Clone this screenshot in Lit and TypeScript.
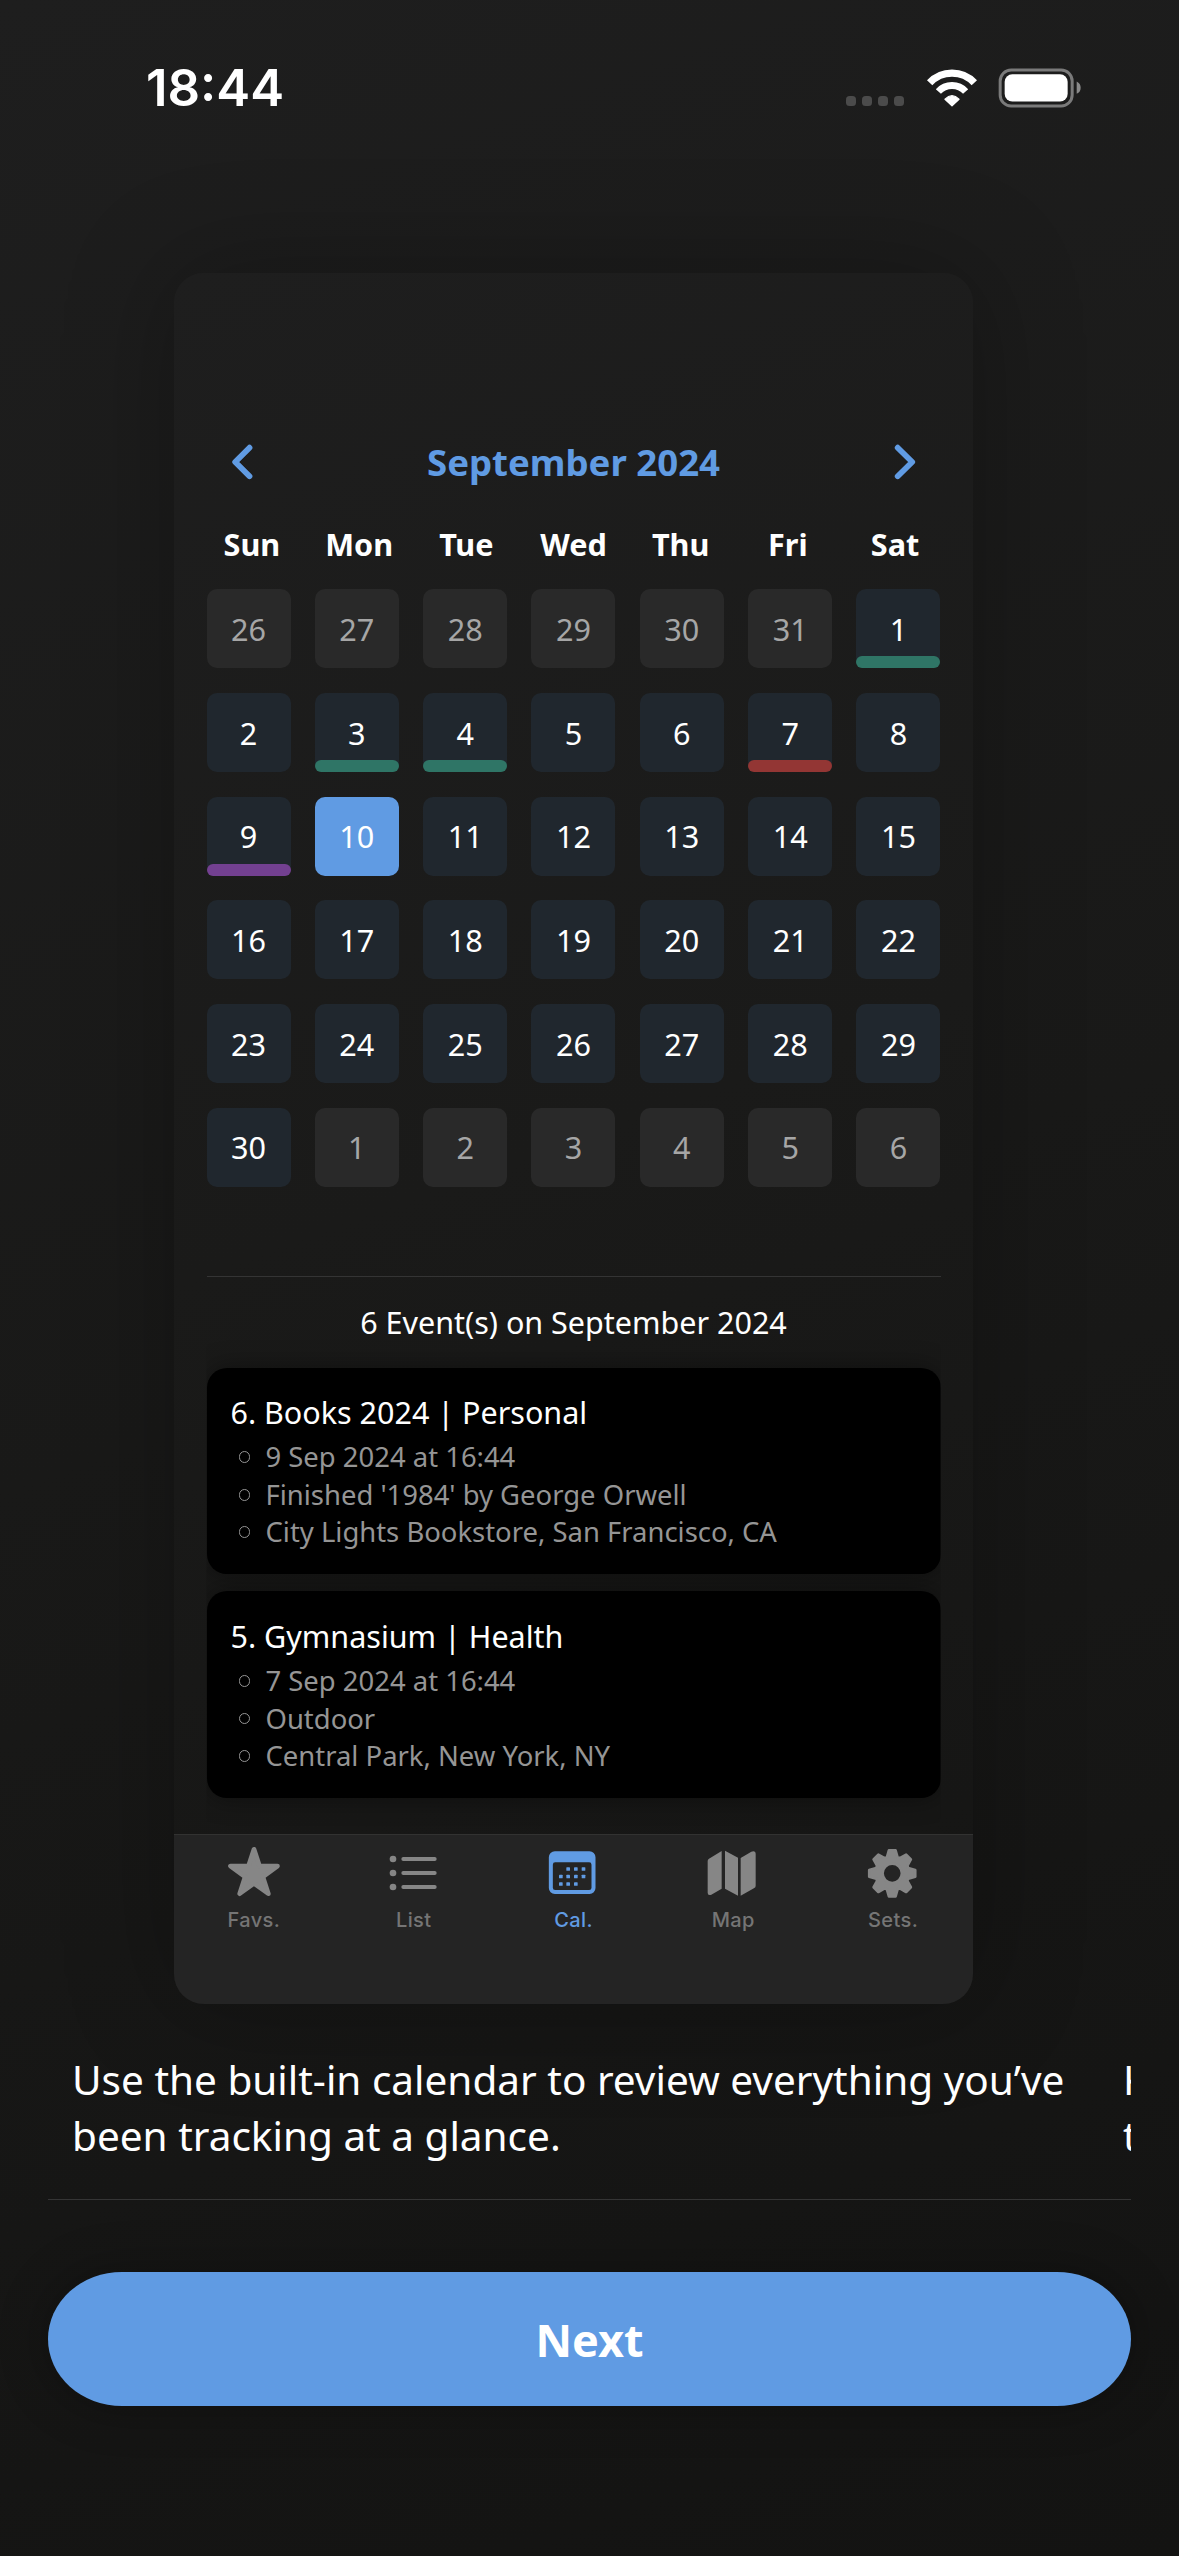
import { LitElement, html, css, svg } from "lit";
import { customElement } from "lit/decorators.js";
import { classMap } from "lit/directives/class-map.js";

type Mark = "green" | "red" | "purple";
interface Day { label: number; outside: boolean; selected: boolean; mark?: Mark; }

const WEEKDAYS = ["Sun", "Mon", "Tue", "Wed", "Thu", "Fri", "Sat"];
const MARKS: Record<number, Mark> = { 1: "green", 3: "green", 4: "green", 7: "red", 9: "purple" };

const range = (from: number, to: number) =>
  Array.from({ length: to - from + 1 }, (_, i) => from + i);

const DAYS: Day[] = [
  ...range(26, 31).map((label) => ({ label, outside: true, selected: false })),
  ...range(1, 30).map((label) => ({ label, outside: false, selected: label === 10, mark: MARKS[label] })),
  ...range(1, 6).map((label) => ({ label, outside: true, selected: false })),
];

const EVENTS = [
  {
    title: "6. Books 2024 | Personal",
    lines: ["9 Sep 2024 at 16:44", "Finished '1984' by George Orwell", "City Lights Bookstore, San Francisco, CA"],
  },
  {
    title: "5. Gymnasium | Health",
    lines: ["7 Sep 2024 at 16:44", "Outdoor", "Central Park, New York, NY"],
  },
];

/** Outline of an eight-toothed gear around the given centre. */
function gearPath(cx: number, cy: number): string {
  const points: string[] = [];
  for (let i = 0; i < 8; i++) {
    const a = (i * Math.PI) / 4;
    for (const [r, w] of [[48, -16], [69, -10], [69, 10], [48, 16]]) {
      const x = cx + r * Math.sin(a) + w * Math.cos(a);
      const y = cy - r * Math.cos(a) + w * Math.sin(a);
      points.push(`${x.toFixed(1)} ${y.toFixed(1)}`);
    }
  }
  const h = 29;
  return `M${points.join("L")}Z M${cx - h} ${cy}a${h} ${h} 0 1 0 ${2 * h} 0a${h} ${h} 0 1 0 ${-2 * h} 0Z`;
}

const TABS = [
  {
    label: "Favs.", box: "192 129 180 180",
    icon: svg`<path stroke="currentColor" stroke-width="14" stroke-linejoin="round"
      d="M282 148L298.5 198H352.5L308.5 230.500L325 281L282 250L239 281L255.500 230.500L211.500 198H265.500Z"/>`,
  },
  {
    label: "List", box: "671 129 180 180",
    icon: svg`${[177, 219, 261].map((y) => svg`<circle cx="698" cy=${y} r="10"/>
      <rect x="723" y=${y - 6} width="106" height="12" rx="6"/>`)}`,
  },
  {
    label: "Cal.", box: "70.5 129 180 180", active: true,
    icon: svg`<path fill-rule="evenodd" d="M106 154H210A18 18 0 0 1 228 172V264A18 18 0 0 1 210 282H106A18 18 0 0 1 88 264V172A18 18 0 0 1 106 154ZM107 187A7 7 0 0 0 100 194V263A7 7 0 0 0 107 270H209A7 7 0 0 0 216 263V194A7 7 0 0 0 209 187Z"/>
      ${[[146, 207], [169, 207], [192, 207], [124, 229.5], [146, 229.5], [169, 229.5], [192, 229.5], [124, 252], [146, 252], [169, 252]].map(
        ([x, y]) => svg`<rect x=${x - 5.5} y=${y - 5.5} width="11" height="11" rx="2"/>`)}`,
  },
  {
    label: "Map", box: "550 129 180 180",
    icon: svg`<path d="M606 153V266L575 284Q564 288 564 278V183Q564 178 568 176ZM616 152L655 173V287L616 266ZM663 174L695 155Q708 151 708 162V257Q708 262 704 264L663 287Z"/>`,
  },
  {
    label: "Sets.", box: "1029.3 129 180 180",
    icon: svg`<path fill-rule="evenodd" stroke="currentColor" stroke-width="8" stroke-linejoin="round" d=${gearPath(1117, 220)}/>`,
  },
];

@customElement("status-bar")
class StatusBar extends LitElement {
  static styles = css`
    :host { display: flex; align-items: center; height: 175px; padding: 0 92.7px 0 146px; box-sizing: border-box; }
    .time { flex: 1; font: 600 50.9px/60px Inter, sans-serif; color: #fff; }
    .dots { display: flex; gap: 6px; margin: 27px 17.5px 0 0; }
    .dot { width: 10px; height: 10px; border-radius: 3.5px; background: #4b4b4b; }
    .wifi { width: 60px; height: 50px; margin-right: 14.8px; }
    .battery { width: 90px; height: 50px; }
  `;
  render() {
    return html`
      <div class="time">18:44</div>
      <div class="dots">${range(1, 4).map(() => html`<span class="dot"></span>`)}</div>
      <svg class="wifi" viewBox="304.5 67.5 180 150" fill="none" stroke="#fff">
        <path stroke-width="22" d="M327.500 127A92 92 0 0 1 461.500 127"/>
        <path stroke-width="21" d="M353.600 153A55.500 55.500 0 0 1 435.400 153"/>
        <path fill="#fff" stroke-width="4" stroke-linejoin="round" d="M394.500 196L373.500 176Q394.500 155 415.500 176Z"/>
      </svg>
      <svg class="battery" viewBox="529 67.5 270 150">
        <rect x="541.5" y="88.5" width="216" height="108" rx="33" fill="none" stroke="#7a7a7a" stroke-width="9"/>
        <rect x="555" y="101" width="189" height="82" rx="23" fill="#fff"/>
        <path fill="#8a8a8a" d="M771 123Q783 129 783 141.500T771 160Z"/>
      </svg>`;
  }
}

@customElement("month-calendar")
class MonthCalendar extends LitElement {
  static styles = css`
    :host { display: block; }
    .header { display: flex; align-items: center; justify-content: space-between; height: 50px; padding: 0 54px; }
    .chevron { width: 30px; height: 44px; fill: none; stroke: #609be3; stroke-width: 5.8; stroke-linecap: round; stroke-linejoin: round; }
    .month { font-size: 36.6px; line-height: 50px; font-weight: 700; color: #609be3; }
    .weekdays { display: grid; grid-template-columns: repeat(7, 107.2px); justify-content: center; margin-top: 37px;
      font-size: 30.6px; line-height: 40px; font-weight: 700; text-align: center; }
    .days { display: grid; grid-template-columns: repeat(7, 84px); grid-auto-rows: 79px; justify-content: space-between;
      row-gap: 24.7px; margin: 25.4px 32.5px 0; }
    .day { display: flex; align-items: center; justify-content: center; position: relative; border-radius: 10px;
      background: #20272e; font-size: 30.6px; line-height: 42px; color: #fff; }
    .outside { background: #292929; color: #a6a6a6; }
    .selected { background: #609be3; }
    .mark { position: absolute; left: 0; right: 0; bottom: 0; height: 12px; border-radius: 6px; }
    .green { background: #2f7566; }
    .red { background: #933634; }
    .purple { background: #734091; }
  `;
  render() {
    return html`
      <div class="header">
        <svg class="chevron" viewBox="228 440 30 44"><path d="M249.500 447.700L235.200 462L249.500 476.200"/></svg>
        <div class="month">September 2024</div>
        <svg class="chevron" viewBox="889 440 30 44"><path d="M897.700 447.700L912.200 462L897.700 476.200"/></svg>
      </div>
      <div class="weekdays">${WEEKDAYS.map((d) => html`<div>${d}</div>`)}</div>
      <div class="days">
        ${DAYS.map((d) => html`<div class=${classMap({ day: true, outside: d.outside, selected: d.selected })}>
          ${d.label}${d.mark ? html`<span class=${classMap({ mark: true, [d.mark]: true })}></span>` : null}
        </div>`)}
      </div>`;
  }
}

@customElement("event-list")
class EventList extends LitElement {
  static styles = css`
    :host { display: block; margin: 89.4px 32.5px 0; }
    .rule { height: 1px; background: #343434; }
    .count { margin-top: 24.6px; text-align: center; font-size: 30.5px; line-height: 40px; }
    .cards { display: flex; flex-direction: column; gap: 17px; margin-top: 25.7px; clip-path: inset(-30px 0); }
    .card { height: 206.7px; box-sizing: border-box; padding: 23.6px 24px 0; border-radius: 20px; background: #000;
      box-shadow: 0 0 26px rgba(0, 0, 0, 0.4); }
    .title { font-size: 30.5px; line-height: 42px; }
    .lines { margin-top: 5.4px; }
    .line { display: flex; align-items: center; gap: 15.2px; padding-left: 8.2px; font-size: 27.45px; line-height: 37.5px; color: #959595; }
    .ring { width: 11.6px; height: 11.6px; box-sizing: border-box; border: 1.2px solid #959595; border-radius: 50%; }
  `;
  render() {
    return html`
      <div class="rule"></div>
      <div class="count">6 Event(s) on September 2024</div>
      <div class="cards">
        ${EVENTS.map((e) => html`<div class="card">
          <div class="title">${e.title}</div>
          <div class="lines">${e.lines.map((l) => html`<div class="line"><span class="ring"></span>${l}</div>`)}</div>
        </div>`)}
      </div>`;
  }
}

@customElement("tab-bar")
class TabBar extends LitElement {
  static styles = css`
    :host { display: flex; height: 170px; box-sizing: border-box; padding-top: 8px; border-top: 1px solid #323231; background: #242424; }
    .tab { flex: 1; display: flex; flex-direction: column; align-items: center; color: #868686; }
    .icon { width: 60px; height: 60px; fill: currentColor; }
    .label { margin-top: 5px; font: 500 20px/24px Inter, sans-serif; letter-spacing: 0.4px; color: #757575; }
    .active, .active .label { color: #609be3; }
  `;
  render() {
    return html`${TABS.map((t) => html`<div class=${classMap({ tab: true, active: !!t.active })}>
      <svg class="icon" viewBox=${t.box}>${t.icon}</svg>
      <div class="label">${t.label}</div>
    </div>`)}`;
  }
}

@customElement("app-root")
class AppRoot extends LitElement {
  static styles = css`
    :host { display: flex; flex-direction: column; height: 2556px; overflow: hidden; color: #fff;
      font-family: "Noto Sans", sans-serif; background: linear-gradient(160deg, #1e1e1e, #191918 50%, #131312); }
    .preview { display: flex; flex-direction: column; width: 799px; height: 1731px; margin: 98px 0 0 174px; box-sizing: border-box;
      padding-top: 164px; border-radius: 30px; overflow: hidden; flex: none;
      background: linear-gradient(160deg, #1e1e1e, #1a1a19 50%, #151514); box-shadow: 0 0 110px rgba(0, 0, 0, 0.28); }
    .tabs { margin-top: auto; }
    .carousel { display: flex; margin: 48px 48px 0; overflow: hidden; font-size: 40.5px; line-height: 56px; white-space: nowrap; flex: none; }
    .slide { flex: none; width: 1051px; padding-left: 24px; }
    .next-slide { width: auto; padding-left: 0; }
    .rule { height: 1px; margin: 35px 48px 0; background: #353535; flex: none; }
    .next { display: flex; align-items: center; justify-content: center; height: 134px; margin: 72px 48px 0; flex: none;
      border-radius: 74px / 67px; background: #609be3; font-size: 45px; font-weight: 700; box-shadow: 0 0 50px rgba(0, 0, 0, 0.3); }
  `;
  render() {
    return html`
      <status-bar></status-bar>
      <section class="preview">
        <month-calendar></month-calendar>
        <event-list></event-list>
        <tab-bar class="tabs"></tab-bar>
      </section>
      <div class="carousel">
        <div class="slide">Use the built-in calendar to review everything you’ve<br>been tracking at a glance.</div>
        <div class="slide next-slide">K<br>t</div>
      </div>
      <div class="rule"></div>
      <div class="next">Next</div>`;
  }
}
